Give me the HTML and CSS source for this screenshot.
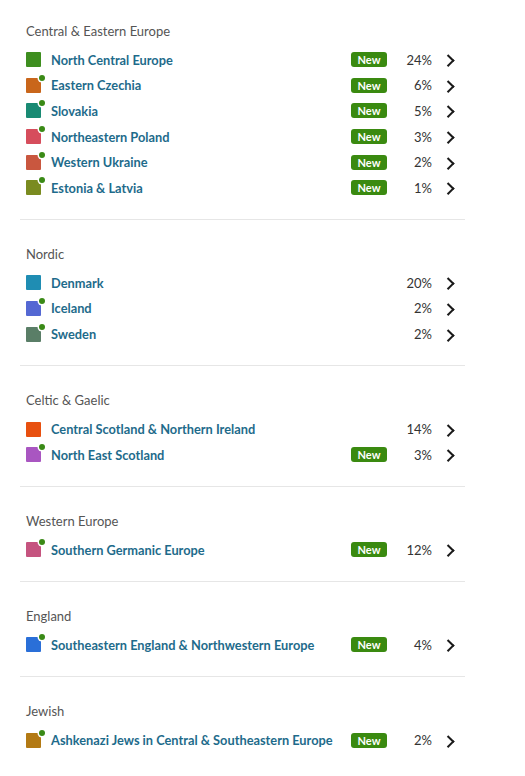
FILE: index.html
```html
<!DOCTYPE html>
<html>
<head>
<meta charset="utf-8">
<link rel="stylesheet" href="styles.css">
</head>
<body>
<div class="list">
  <section class="group">
    <h3 class="group-title">Central &amp; Eastern Europe</h3>
    <div class="row"><span class="swatch" style="background:#3e8e1f"></span><span class="name">North Central Europe</span><span class="badge">New</span><span class="pct">24%</span><span class="chev"></span></div>
    <div class="row"><span class="swatch dot" style="background:#c9661b"></span><span class="name">Eastern Czechia</span><span class="badge">New</span><span class="pct">6%</span><span class="chev"></span></div>
    <div class="row"><span class="swatch dot" style="background:#198a73"></span><span class="name">Slovakia</span><span class="badge">New</span><span class="pct">5%</span><span class="chev"></span></div>
    <div class="row"><span class="swatch dot" style="background:#d64d5c"></span><span class="name">Northeastern Poland</span><span class="badge">New</span><span class="pct">3%</span><span class="chev"></span></div>
    <div class="row"><span class="swatch dot" style="background:#c9573f"></span><span class="name">Western Ukraine</span><span class="badge">New</span><span class="pct">2%</span><span class="chev"></span></div>
    <div class="row"><span class="swatch dot" style="background:#7a8b20"></span><span class="name">Estonia &amp; Latvia</span><span class="badge">New</span><span class="pct">1%</span><span class="chev"></span></div>
  </section>
  <section class="group">
    <h3 class="group-title">Nordic</h3>
    <div class="row"><span class="swatch" style="background:#1f8db3"></span><span class="name">Denmark</span><span class="pct">20%</span><span class="chev"></span></div>
    <div class="row"><span class="swatch dot" style="background:#5468d3"></span><span class="name">Iceland</span><span class="pct">2%</span><span class="chev"></span></div>
    <div class="row"><span class="swatch dot" style="background:#5a7e67"></span><span class="name">Sweden</span><span class="pct">2%</span><span class="chev"></span></div>
  </section>
  <section class="group">
    <h3 class="group-title">Celtic &amp; Gaelic</h3>
    <div class="row"><span class="swatch" style="background:#e8500f"></span><span class="name">Central Scotland &amp; Northern Ireland</span><span class="pct">14%</span><span class="chev"></span></div>
    <div class="row"><span class="swatch dot" style="background:#a956c1"></span><span class="name">North East Scotland</span><span class="badge">New</span><span class="pct">3%</span><span class="chev"></span></div>
  </section>
  <section class="group">
    <h3 class="group-title">Western Europe</h3>
    <div class="row"><span class="swatch dot" style="background:#c5547f"></span><span class="name">Southern Germanic Europe</span><span class="badge">New</span><span class="pct">12%</span><span class="chev"></span></div>
  </section>
  <section class="group">
    <h3 class="group-title">England</h3>
    <div class="row"><span class="swatch dot" style="background:#2a6fd8"></span><span class="name">Southeastern England &amp; Northwestern Europe</span><span class="badge">New</span><span class="pct">4%</span><span class="chev"></span></div>
  </section>
  <section class="group last">
    <h3 class="group-title">Jewish</h3>
    <div class="row"><span class="swatch dot" style="background:#b37a14"></span><span class="name">Ashkenazi Jews in Central &amp; Southeastern Europe</span><span class="badge">New</span><span class="pct">2%</span><span class="chev"></span></div>
  </section>
</div>
</body>
</html>
```

FILE: styles.css
```css
* { box-sizing: border-box; }
html, body { margin: 0; padding: 0; background: #fff; }
body { font-family: Lato, "Liberation Sans", sans-serif; }
.list { width: 445px; margin-left: 20px; }
.group {
  padding: 25px 0 18.5px 6px;
  border-bottom: 1px solid #e6e6e6;
}
.group:first-child { padding-top: 22px; }
.group.last { border-bottom: none; }
.group-title {
  margin: 0 0 7px 0;
  font-size: 13px;
  line-height: 18px;
  font-weight: 400;
  color: #555;
}
.row {
  height: 25.6px;
  display: flex;
  align-items: center;
  padding-right: 11px;
}
.swatch {
  position: relative;
  width: 15px;
  height: 15px;
  border-radius: 1px;
  flex: none;
  margin-right: 10px;
}
.swatch.dot::after {
  content: "";
  position: absolute;
  top: -3px;
  right: -4px;
  width: 6px;
  height: 6px;
  border-radius: 50%;
  background: #3a8a16;
  box-shadow: 0 0 0 1.5px #fff;
}
.name {
  flex: 1;
  font-size: 12.8px;
  font-weight: 700;
  color: #1e6b8b;
  white-space: nowrap;
}
.badge {
  flex: none;
  width: 36px;
  height: 15px;
  border-radius: 3px;
  background: #3a8a10;
  color: #fff;
  font-size: 11px;
  font-weight: 700;
  line-height: 15px;
  text-align: center;
}
.pct {
  flex: none;
  width: 45px;
  text-align: right;
  font-size: 13px;
  color: #333;
}
.chev {
  flex: none;
  width: 8px;
  height: 12px;
  margin-left: 14px;
  position: relative;
}
.chev::before {
  content: "";
  position: absolute;
  left: -2px;
  top: 2.5px;
  width: 6.5px;
  height: 6.5px;
  border-top: 2px solid #1a1a1a;
  border-right: 2px solid #1a1a1a;
  transform: rotate(45deg);
}
```
